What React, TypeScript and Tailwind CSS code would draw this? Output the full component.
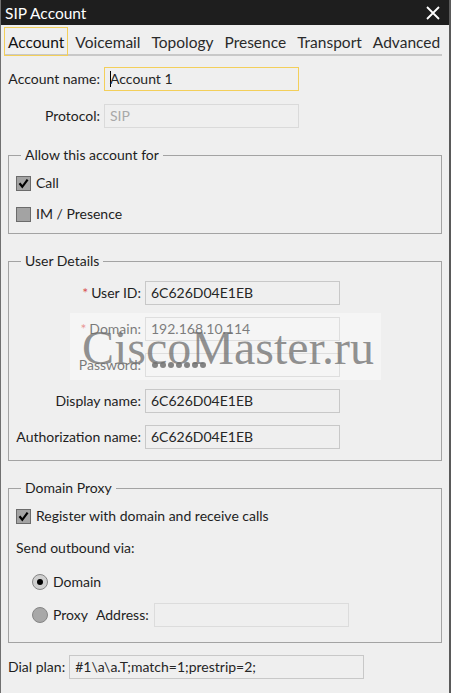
import React from 'react'

const font = "font-['Lato','Open_Sans',sans-serif]"

function Field({ value, muted, focused, w = 'w-[195px]', className = '' }: { value?: string; muted?: boolean; focused?: boolean; w?: string; className?: string }) {
  return (
    <div
      className={`${w} h-[24px] flex items-center px-[5px] border whitespace-nowrap ${
        focused ? 'border-[#f3cf5a]' : muted ? 'border-[#dadada]' : 'border-[#c8c8c8]'
      } ${muted ? 'text-[#a8a8a8]' : 'text-[#262626]'} bg-[#efefef] ${className}`}
    >
      {focused && <span className="w-px h-[16px] bg-black -mr-px" />}
      {value}
    </div>
  )
}

function CheckBox({ checked, label }: { checked?: boolean; label: string }) {
  return (
    <div className="flex items-center h-[22px] gap-[5px]">
      <div className="w-[15px] h-[15px] border border-[#6b6b6b] bg-[#a3a3a3] flex items-center justify-center">
        {checked && (
          <svg width="11" height="11" viewBox="0 0 11 11">
            <path d="M1.5 5.2 L4.3 8.8 L9.6 1.6" fill="none" stroke="#000" strokeWidth="2.2" />
          </svg>
        )}
      </div>
      <span>{label}</span>
    </div>
  )
}

function Radio({ selected }: { selected?: boolean }) {
  return (
    <div
      className={`w-[16px] h-[16px] rounded-full border border-[#858585] flex items-center justify-center ${
        selected ? 'bg-[#cfcfcf]' : 'bg-[#a8a8a8]'
      }`}
    >
      {selected && <div className="w-[6px] h-[6px] rounded-full bg-black" />}
    </div>
  )
}

function Group({ title, children, className = '' }: { title: string; children: React.ReactNode; className?: string }) {
  return (
    <fieldset className={`w-[434px] border border-[#a3a3a3] px-[7px] ${className}`}>
      <legend className="ml-[5px] px-[4px] leading-[18px] text-[#1e1e1e]">{title}</legend>
      {children}
    </fieldset>
  )
}

function DetailRow({ label, required, value }: { label: string; required?: boolean; value: string }) {
  return (
    <div className="flex items-center gap-[4px]">
      <div className="w-[125px] text-right whitespace-nowrap">
        {required && <span className="text-[#d9534f] mr-[3px]">*</span>}
        {label}
      </div>
      <Field value={value} />
    </div>
  )
}

export default function App() {
  const tabs = ['Account', 'Voicemail', 'Topology', 'Presence', 'Transport', 'Advanced']

  return (
    <div className={`${font} w-[451px] h-[693px] bg-[#efefef] text-[14px] leading-[18px] text-[#1e1e1e] border-l border-[#707070] border-r-2 border-r-[#5a5a5a] relative overflow-hidden`}>
      <div className="h-[25px] bg-[#1e1e1e] flex items-center justify-between pl-[4px] pr-[9px] text-white text-[15.5px]">
        <span>SIP Account</span>
        <svg width="14" height="14" viewBox="0 0 14 14">
          <path d="M1 1 L13 13 M13 1 L1 13" stroke="#fff" strokeWidth="1.8" />
        </svg>
      </div>

      <div className="ml-[3px] w-[438px] flex items-end gap-[3px] pt-[2px] border-b-2 border-[#c8c8c8] text-[15.5px]">
        {tabs.map((t, i) => (
          <div
            key={t}
            className={`h-[29px] px-[3px] flex items-center -mb-[2px] border whitespace-nowrap ${
              i === 0 ? 'border-[#f3cf5a] text-[#111]' : 'border-transparent text-[#2a2a2a]'
            }`}
          >
            {t}
          </div>
        ))}
      </div>

      <div className="px-[7px] flex flex-col">
        <div className="flex items-center gap-[4px] mt-[11px]">
          <div className="w-[92px] text-right whitespace-nowrap">Account name:</div>
          <Field value="Account 1" focused />
        </div>
        <div className="flex items-center gap-[4px] mt-[13px]">
          <div className="w-[92px] text-right">Protocol:</div>
          <Field value="SIP" muted />
        </div>

        <Group title="Allow this account for" className="mt-[18px] pb-[8px]">
          <div className="mt-[8px] flex flex-col gap-[9px]">
            <CheckBox checked label="Call" />
            <CheckBox label="IM / Presence" />
          </div>
        </Group>

        <Group title="User Details" className="mt-[18px] pb-[11px]">
          <div className="mt-[11px] flex flex-col gap-[12px]">
            <DetailRow label="User ID:" required value="6C626D04E1EB" />
            <DetailRow label="Domain:" required value="192.168.10.114" />
            <div className="flex items-center gap-[4px]">
              <div className="w-[125px] text-right">Password:</div>
              <div className="w-[195px] h-[24px] flex items-center gap-[2px] px-[6px] border border-[#c8c8c8]">
                {Array.from({ length: 7 }).map((_, i) => (
                  <span key={i} className="w-[6px] h-[6px] rounded-full bg-[#333]" />
                ))}
              </div>
            </div>
            <DetailRow label="Display name:" value="6C626D04E1EB" />
            <DetailRow label="Authorization name:" value="6C626D04E1EB" />
          </div>
        </Group>

        <Group title="Domain Proxy" className="mt-[18px] pb-[15px]">
          <div className="mt-[8px]">
            <CheckBox checked label="Register with domain and receive calls" />
          </div>
          <div className="mt-[10px] h-[22px] flex items-center">Send outbound via:</div>
          <div className="mt-[12px] h-[22px] flex items-center gap-[5px] pl-[16px]">
            <Radio selected />
            <span>Domain</span>
          </div>
          <div className="mt-[10px] h-[24px] flex items-center pl-[16px]">
            <Radio />
            <span className="ml-[5px]">Proxy</span>
            <span className="ml-[8px]">Address:</span>
            <Field className="ml-[5px] border-[#dcdcdc]" />
          </div>
        </Group>

        <div className="flex items-center gap-[4px] mt-[12px]">
          <span>Dial plan:</span>
          <Field value="#1\a\a.T;match=1;prestrip=2;" w="w-[295px]" />
        </div>
      </div>

      <div className="absolute left-[69px] top-[313px] w-[311px] h-[67px] bg-white/40">
        <span className="absolute left-[12px] top-[5px] font-['Liberation_Serif',serif] text-[48px] leading-[60px] text-[#6f6f6f]/75 whitespace-nowrap">
          CiscoMaster.ru
        </span>
      </div>
    </div>
  )
}
